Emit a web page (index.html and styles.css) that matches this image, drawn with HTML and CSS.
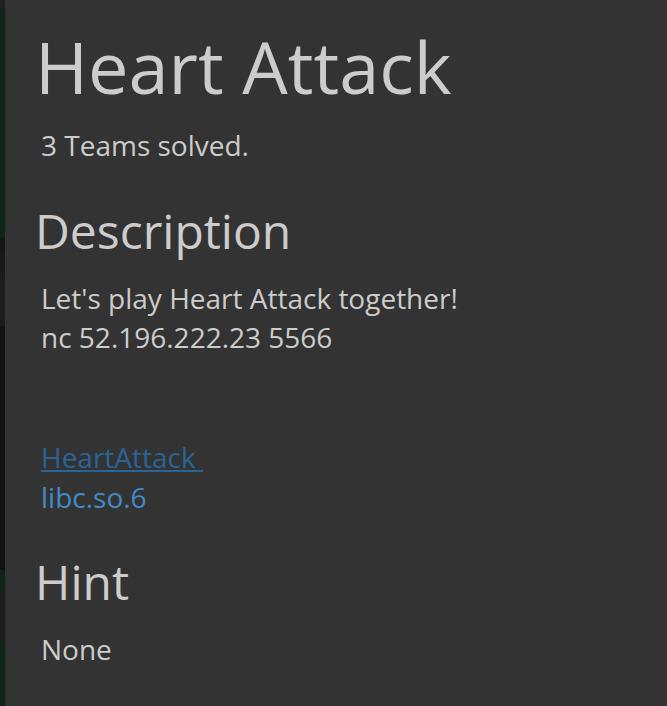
FILE: index.html
```html
<!DOCTYPE html>
<html lang="en">
<head>
<meta charset="utf-8">
<title>Heart Attack</title>
<link rel="stylesheet" href="styles.css">
</head>
<body>
<div class="page">
  <div class="backdrop"></div>
  <main class="panel">
    <h1 class="title">Heart Attack</h1>
    <p class="solved">3 Teams solved.</p>
    <h2 class="section">Description</h2>
    <p class="text">Let's play Heart Attack together!<br>nc 52.196.222.23 5566</p>
    <p class="files">
      <a class="file file-visited" href="#">HeartAttack&nbsp;</a><br>
      <a class="file" href="#">libc.so.6</a>
    </p>
    <h2 class="section">Hint</h2>
    <p class="text">None</p>
  </main>
</div>
</body>
</html>
```

FILE: styles.css
```css
html, body {
  margin: 0;
  padding: 0;
  height: 100%;
  background: #333333;
}

.page {
  display: flex;
  min-height: 706px;
  font-family: "Open Sans", "Liberation Sans", sans-serif;
  color: #cccccc;
}

.backdrop {
  flex: 0 0 5px;
  background: linear-gradient(to bottom,
    #231f20 0, #231f20 8px,
    #10251a 8px, #10251a 237px,
    #171616 237px, #171616 253px,
    #1a1919 253px, #1a1919 273px,
    #1c1c1c 273px, #1c1c1c 326px,
    #121111 326px, #121111 570px,
    #10251a 570px, #10251a 590px,
    #1e1c1d 590px, #1e1c1d 642px,
    #10251a 642px, #10251a 706px);
}

.panel {
  flex: 1;
  background: #333333;
  padding: 26px 20px 0 30px;
}

.title {
  margin: 0;
  font-size: 72px;
  font-weight: 400;
  line-height: 80px;
}

.solved {
  margin: 20px 0 0 6px;
  font-size: 28px;
  line-height: 38px;
}

.section {
  margin: 40px 0 0 0;
  font-size: 48px;
  font-weight: 400;
  line-height: 53px;
}

.text {
  margin: 22px 0 0 6px;
  font-size: 28px;
  line-height: 39px;
}

.files {
  margin: 80px 0 0 6px;
  font-size: 28px;
  line-height: 40px;
}

.files + .section {
  margin-top: 38px;
}

.file {
  color: #428bca;
  text-decoration: none;
}

.file-visited {
  color: #2a6496;
  text-decoration: underline;
}
```
